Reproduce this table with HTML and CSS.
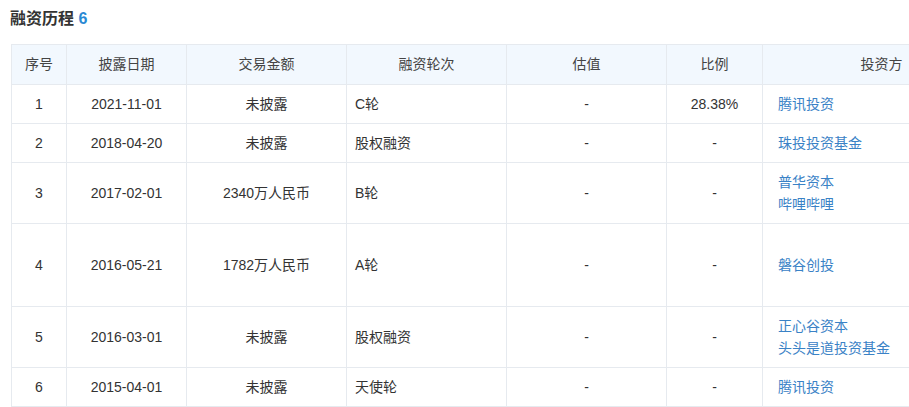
FILE: index.html
```html
<!DOCTYPE html>
<html lang="zh-CN">
<head>
<meta charset="utf-8">
<title>融资历程</title>
<link rel="stylesheet" href="styles.css">
</head>
<body>
<div class="section">
  <h2 class="title">融资历程 <span class="count">6</span></h2>
  <table class="fin-table">
    <colgroup>
      <col class="c-no"><col class="c-date"><col class="c-amt"><col class="c-round"><col class="c-val"><col class="c-ratio"><col class="c-inv">
    </colgroup>
    <thead>
      <tr>
        <th>序号</th><th>披露日期</th><th>交易金额</th><th>融资轮次</th><th>估值</th><th>比例</th><th>投资方</th>
      </tr>
    </thead>
    <tbody>
      <tr>
        <td class="ctr">1</td><td class="ctr">2021-11-01</td><td class="ctr">未披露</td><td class="round">C轮</td><td class="ctr">-</td><td class="ctr">28.38%</td>
        <td class="inv"><a href="#">腾讯投资</a></td>
      </tr>
      <tr>
        <td class="ctr">2</td><td class="ctr">2018-04-20</td><td class="ctr">未披露</td><td class="round">股权融资</td><td class="ctr">-</td><td class="ctr">-</td>
        <td class="inv"><a href="#">珠投投资基金</a></td>
      </tr>
      <tr>
        <td class="ctr">3</td><td class="ctr">2017-02-01</td><td class="ctr">2340万人民币</td><td class="round">B轮</td><td class="ctr">-</td><td class="ctr">-</td>
        <td class="inv"><a href="#">普华资本</a><a href="#">哔哩哔哩</a></td>
      </tr>
      <tr class="tall">
        <td class="ctr">4</td><td class="ctr">2016-05-21</td><td class="ctr">1782万人民币</td><td class="round">A轮</td><td class="ctr">-</td><td class="ctr">-</td>
        <td class="inv"><a href="#">磐谷创投</a></td>
      </tr>
      <tr>
        <td class="ctr">5</td><td class="ctr">2016-03-01</td><td class="ctr">未披露</td><td class="round">股权融资</td><td class="ctr">-</td><td class="ctr">-</td>
        <td class="inv"><a href="#">正心谷资本</a><a href="#">头头是道投资基金</a></td>
      </tr>
      <tr>
        <td class="ctr">6</td><td class="ctr">2015-04-01</td><td class="ctr">未披露</td><td class="round">天使轮</td><td class="ctr">-</td><td class="ctr">-</td>
        <td class="inv"><a href="#">腾讯投资</a></td>
      </tr>
    </tbody>
  </table>
</div>
</body>
</html>
```

FILE: styles.css
```css
html, body {
  margin: 0;
  padding: 0;
  background: #fff;
  overflow: hidden;
}
body {
  font-family: "Liberation Sans", "Noto Sans CJK SC", sans-serif;
  color: #333;
  font-size: 14px;
}
.section {
  padding: 9px 0 0 10px;
}
.title {
  margin: 0 0 15px 0;
  font-size: 16px;
  line-height: 20px;
  font-weight: bold;
  color: #333;
}
.count {
  color: #2a8ad4;
}
.fin-table {
  margin-left: 1px;
  border-collapse: collapse;
  table-layout: fixed;
  width: 989px;
}
.c-no { width: 55px; }
.c-date { width: 120px; }
.c-amt { width: 160px; }
.c-round { width: 160px; }
.c-val { width: 160px; }
.c-ratio { width: 96px; }
.c-inv { width: 238px; }
.fin-table th,
.fin-table td {
  border: 1px solid #e6eaef;
  line-height: 22px;
  padding: 8px 8px;
  font-weight: normal;
  white-space: nowrap;
}
.fin-table th {
  background: #f2f8fe;
  color: #444;
  text-align: center;
  padding: 8px 8px 9px;
}
.fin-table td.ctr {
  text-align: center;
}
.fin-table td.round {
  text-align: left;
}
.fin-table td.inv {
  text-align: left;
  padding-left: 15px;
}
.inv a {
  display: block;
  color: #3a82c6;
  text-decoration: none;
}
.tall td {
  height: 66px;
}
```
